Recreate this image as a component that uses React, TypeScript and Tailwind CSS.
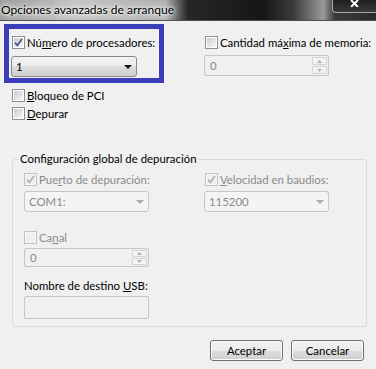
import clsx from "clsx";
import type { ReactNode } from "react";

const btnGrad = "bg-[linear-gradient(#f2f2f2,#ebebeb_50%,#dddddd_50%,#cfcfcf)]";

function CheckBox({ checked = false, disabled = false }: { checked?: boolean; disabled?: boolean }) {
  return (
    <span
      className={clsx(
        "flex h-[13px] w-[13px] shrink-0 border p-px",
        disabled ? "border-[#c2c2c2] bg-[#f8f8f8]" : "border-[#8e8f8f] bg-white"
      )}
    >
      <span
        className={clsx(
          "relative block h-full w-full",
          disabled ? "bg-[#f0f0f0]" : "bg-gradient-to-br from-[#c9ccd1] to-[#f7f7f7]"
        )}
      >
        {checked && (
          <svg viewBox="0 0 9 9" className="absolute left-0 top-0 h-[9px] w-[9px] overflow-visible">
            <path
              d="M1 4.6 L3.4 7.4 L8 1"
              fill="none"
              stroke={disabled ? "#b3b3b3" : "#46578c"}
              strokeWidth="1.8"
            />
          </svg>
        )}
      </span>
    </span>
  );
}

function CheckRow({
  checked,
  disabled,
  children,
}: {
  checked?: boolean;
  disabled?: boolean;
  children: ReactNode;
}) {
  return (
    <div className={clsx("flex h-[15px] items-center gap-[2px] whitespace-nowrap", disabled && "text-[#8b8b8b]")}>
      <CheckBox checked={checked} disabled={disabled} />
      <span>{children}</span>
    </div>
  );
}

function Combo({ value, disabled = false, className }: { value: string; disabled?: boolean; className?: string }) {
  return (
    <div
      className={clsx(
        "flex h-[21px] items-center justify-between rounded-[3px] border pl-[4px] pr-[4px]",
        disabled ? "border-[#c6c6c6] bg-[#f4f4f4] text-[#8b8b8b]" : clsx("border-[#8a8a8a] text-black", btnGrad),
        className
      )}
    >
      <span>{value}</span>
      <svg width="8" height="4" viewBox="0 0 8 4">
        <path d="M0 0h8L4 4z" fill={disabled ? "#a9a9a9" : "#111"} />
      </svg>
    </div>
  );
}

function Spin({ className }: { className?: string }) {
  return (
    <div className={clsx("flex items-stretch rounded-[2px] border border-[#c6c6c6] bg-[#f0f0f0]", className)}>
      <span className="flex flex-1 items-center pl-[5px] text-[#8b8b8b]">0</span>
      <div className="flex w-[16px] flex-col gap-[1px] py-[1px] pr-[1px]">
        <span className="flex flex-1 items-center justify-center rounded-[1px] border border-[#d4d4d4] bg-[#f4f4f4]">
          <svg width="5" height="3" viewBox="0 0 5 3">
            <path d="M0 3h5L2.5 0z" fill="#b0b0b0" />
          </svg>
        </span>
        <span className="flex flex-1 items-center justify-center rounded-[1px] border border-[#d4d4d4] bg-[#f4f4f4]">
          <svg width="5" height="3" viewBox="0 0 5 3">
            <path d="M0 0h5L2.5 3z" fill="#b0b0b0" />
          </svg>
        </span>
      </div>
    </div>
  );
}

function WinButton({ children }: { children: ReactNode }) {
  return (
    <button
      className={clsx(
        "h-[21px] w-[73px] rounded-[3px] border border-[#707070] text-black shadow-[inset_0_0_0_1px_#fbfbfb]",
        btnGrad
      )}
    >
      {children}
    </button>
  );
}

export default function App() {
  return (
    <div className="relative h-[369px] w-[376px] overflow-hidden bg-[#f0f0f0] font-['Lato',sans-serif] text-[11.4px] leading-[16px] text-black">
      {/* title bar */}
      <div className="flex h-[21px] border-b border-[#505050] bg-[linear-gradient(90deg,#9c9c9c_0%,#c4c4c4_20%,#b0b0b0_44%,#262626_50%,#161616_70%,#3a3a3a_78%,#9a9a9a_86%,#3c3c3c_89%,#2a2a2a_100%)]">
        <span className="mt-[2px] whitespace-nowrap pl-[1px] text-[12px] [text-shadow:0_0_6px_#fff,0_0_3px_#fff,0_0_10px_#fff]">
          Opciones avanzadas de arranque
        </span>
        <div className="ml-auto flex h-[13px] w-[44px] justify-center rounded-bl-[4px] border-b border-l border-[#a8a8a8] bg-[linear-gradient(#1e1e1e,#3a3a3a)]">
          <svg width="9" height="7" viewBox="0 0 9 7" className="mt-0">
            <path d="M1 0 L8 7 M8 0 L1 7" stroke="#fff" strokeWidth="2" />
          </svg>
        </div>
      </div>

      {/* top options */}
      <div className="grid grid-cols-[193px_1fr] pl-[11px] pt-[14px]">
        <div>
          <div className="pl-[1px]">
            <CheckRow checked>
              N&uacute;<u>m</u>ero de procesadores:
            </CheckRow>
          </div>
          <Combo value="1" className="mt-[6px] w-[126px]" />
        </div>
        <div>
          <div className="pl-[1px]">
            <CheckRow>
              Cantidad m&aacute;<u>x</u>ima de memoria:
            </CheckRow>
          </div>
          <Spin className="mt-[5px] h-[21px] w-[125px]" />
        </div>
      </div>

      <div className="mt-[11px] flex flex-col gap-[3px] pl-[12px]">
        <CheckRow>
          <u>B</u>loqueo de PCI
        </CheckRow>
        <CheckRow>
          <u>D</u>epurar
        </CheckRow>
      </div>

      <fieldset className="ml-[12px] mt-[30px] w-[355px] rounded-[3px] border border-[#d5dadf] pb-[7px] pl-[11px] pt-[5px]">
        <legend className="-ml-[5px] px-[1px]">Configuraci&oacute;n global de depuraci&oacute;n</legend>
        <div className="grid grid-cols-[180px_1fr]">
          <div>
            <CheckRow checked disabled>
              Pue<u>r</u>to de depuraci&oacute;n:
            </CheckRow>
            <Combo value="COM1:" disabled className="mt-[4px] w-[125px]" />
          </div>
          <div className="pl-[1px]">
            <CheckRow checked disabled>
              <u>V</u>elocidad en baudios:
            </CheckRow>
            <Combo value="115200" disabled className="-ml-[1px] mt-[4px] w-[125px]" />
          </div>
        </div>
        <div className="mt-[18px]">
          <CheckRow disabled>
            Ca<u>n</u>al
          </CheckRow>
        </div>
        <Spin className="mt-[3px] h-[19px] w-[125px]" />
        <div className="mt-[11px]">
          Nombre de destino <u>U</u>SB:
        </div>
        <div className="mt-[2px] h-[23px] w-[125px] rounded-[2px] border border-[#c6c6c6] bg-[#f0f0f0]" />
      </fieldset>

      <div className="mt-[13px] flex justify-end gap-[8px] pr-[12px]">
        <WinButton>Aceptar</WinButton>
        <WinButton>Cancelar</WinButton>
      </div>

      {/* annotation box drawn over the dialog */}
      <div className="absolute left-[4px] top-[24px] h-[59px] w-[160px] border-[5px] border-[#3b3eb8]" />
    </div>
  );
}
